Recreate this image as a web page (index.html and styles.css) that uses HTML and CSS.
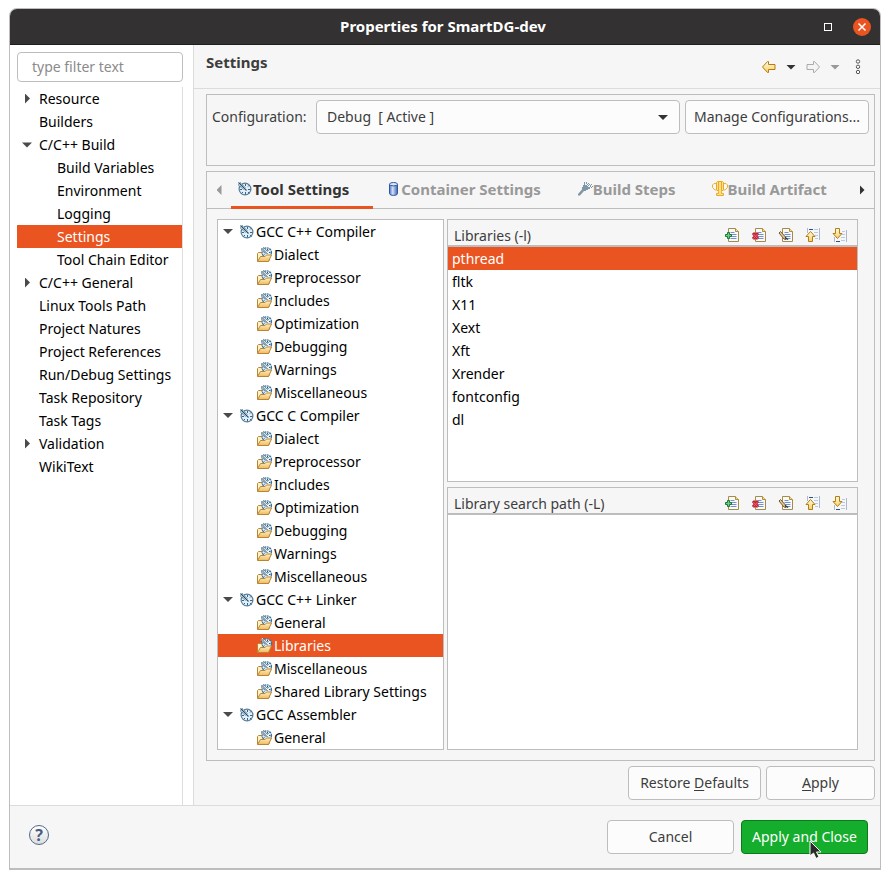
FILE: index.html
```html
<!DOCTYPE html>
<html lang="en">
<head>
<meta charset="utf-8">
<title>Properties for SmartDG-dev</title>
<link rel="stylesheet" href="styles.css">
</head>
<body>
<svg class="defs" aria-hidden="true">
  <defs>
    <linearGradient id="gold" x1="0" y1="0" x2="0" y2="1"><stop offset="0" stop-color="#fffbe0"/><stop offset="1" stop-color="#f6cf63"/></linearGradient>
    <linearGradient id="sand" x1="0" y1="0" x2="0" y2="1"><stop offset="0" stop-color="#fdf0c4"/><stop offset="1" stop-color="#f0b95c"/></linearGradient>
    <linearGradient id="steel" x1="0" y1="0" x2="1" y2="0"><stop offset="0" stop-color="#4a74c0"/><stop offset=".4" stop-color="#d3e2fa"/><stop offset="1" stop-color="#3b63b0"/></linearGradient>
    <symbol id="gauge" viewBox="0 0 16 16">
      <circle cx="8" cy="8" r="5.900" fill="#e3eff8" stroke="#557f9c" stroke-width="1.200"/>
      <path d="M8.500 3v2M8.500 11v2.500M11 8.500h2.500M3 8.500h2M11 5.500l1.500-1.500M11 11l1.500 1.500M6 11l-1.500 1.500" stroke="#376587"/>
      <path d="M1.500 1.500l7 7" stroke="#fff" stroke-width="3"/>
      <path d="M1 3.500l5.500 5M3 1.500l5.500 5" stroke="#39637f" stroke-dasharray="1.600 .7"/>
      <path d="M1.500 1.500l8 8" stroke="#24506f" stroke-width="1.100"/>
    </symbol>
    <symbol id="folder" viewBox="0 0 16 16">
      <path d="M.5 14V6.500l1-1h3l1 1.500H12V14z" fill="#fdf1c8" stroke="#b98534"/>
      <circle cx="9.800" cy="5.500" r="4.700" fill="#e3eff8" stroke="#3d7396" stroke-width="1.200" stroke-dasharray="2 .7"/>
      <path d="M4.500 1l6 5.500" stroke="#fff" stroke-width="2.800"/>
      <path d="M4 2.500l5 4.500M6 .5l4.500 4" stroke="#234c69" stroke-dasharray="1.500 .7"/>
      <path d="M4.500 1l6 6" stroke="#234c69"/>
      <path d="M10.500 2v1.500M12 5.500h1.500M11.500 3.500l1-1M7.500 7.500l-1 1" stroke="#285a7c"/>
      <path d="M.5 14.500l3-5h4.500l1.500-1.500h5l-3 6.500z" fill="url(#sand)" stroke="#b98534"/>
    </symbol>
    <symbol id="page" viewBox="0 0 16 16">
      <path d="M4.500 1.500h7l3 3v10h-10z" fill="#f6faff" stroke="#a78b45"/>
      <path d="M11.500 1.500v3h3" fill="#f4dc95" stroke="#b18f38"/>
      <path d="M6.500 5.500h4M6.500 7.500h6M6.500 9.500h6M6.500 11.500h6" stroke="#7692c5"/>
    </symbol>
    <symbol id="add" viewBox="0 0 16 16"><use href="#page"/>
      <path d="M3.500 5.500h2v2h2v2h-2v2h-2v-2h-2v-2h2z" fill="#79c58a" stroke="#157a33"/></symbol>
    <symbol id="delete" viewBox="0 0 16 16"><use href="#page"/>
      <path d="M2 6l5 6M7 6l-5 6" stroke="#c01f36" stroke-width="3"/><path d="M2.500 7l4 4.500M6.500 7l-4 4.500" stroke="#ef6675" stroke-width="1"/></symbol>
    <symbol id="edit" viewBox="0 0 16 16"><use href="#page"/>
      <path d="M1 6l1.500-1.500L7.500 10l.5 2.500-2-.5z" fill="#e8c990" stroke="#755a30"/><path d="M7 10.500l3 2" stroke="#2c3552" stroke-width="1.500"/></symbol>
    <symbol id="up" viewBox="0 0 16 16">
      <path d="M2.500 1v5M14.500 1v12" stroke="#adb9cb"/><path d="M4 2.500h4" stroke="#25508f"/><path d="M9 2.500h4M9 5.500h4M10 8.500h3M10 11.500h3" stroke="#b9c9e8"/>
      <path d="M5.500 4.500l4.500 5H7.500v5h-4v-5H1z" fill="url(#gold)" stroke="#b57d16"/></symbol>
    <symbol id="down" viewBox="0 0 16 16">
      <path d="M2.500 10v5M14.500 3v12" stroke="#adb9cb"/><path d="M4 14.500h4" stroke="#25508f"/><path d="M9 13.500h4M9 10.500h4M10 7.500h3M10 4.500h3" stroke="#b9c9e8"/>
      <path d="M5.500 11.500L1 6.500h2.500v-5h4v5H10z" fill="url(#gold)" stroke="#b57d16"/></symbol>
    <symbol id="arrow" viewBox="0 0 16 16"><path d="M1.500 8l5-5.500h1v3h6.500v5H7.500v3h-1z" stroke-linejoin="round"/></symbol>
    <symbol id="container" viewBox="0 0 16 16"><path d="M4.500 3.500v9c0 2.500 8 2.500 8 0v-9" fill="url(#steel)" stroke="#2f559f"/><ellipse cx="8.500" cy="3.200" rx="4" ry="1.700" fill="#dce8fb" stroke="#2f559f"/></symbol>
    <symbol id="hammer" viewBox="0 0 16 16"><path d="M1 13l4-4.500V6h1V4h1V2h1v2h2v1h1v1h2v2h-2v1H9v1H7L3 14.500H1z" fill="#8097a8"/><path d="M7 1.500h4M9 2.500h4M10 3.500h5M11 4.500h4M13 5.500h3M14 6.500h1" stroke="#8097a8" stroke-dasharray="1 1"/></symbol>
    <symbol id="trophy" viewBox="0 0 16 16"><path d="M4 2.500H2L.5 4v2.500L3 9h2M12 2.500h2L15.500 4v2.500L13 9h-2" fill="none" stroke="#eeb12b"/><path d="M4.500 1.500l1-1h5l1 1v7l-2 2v2h2v2h-7v-2h2v-2l-2-2z" fill="#fae08b" stroke="#edaa24"/><path d="M6.500 1v9M9.500 1v9" stroke="#edaa24"/></symbol>
  </defs>
</svg>

<div class="window">
  <header class="titlebar">
    <h1>Properties for SmartDG-dev</h1>
    <div class="controls">
      <button class="maximize" aria-label="Maximize"></button>
      <button class="close" aria-label="Close"><svg viewBox="0 0 18 18"><path d="M5.500 5.500l7 7M12.500 5.500l-7 7" stroke="#fff" stroke-width="1.500"/></svg></button>
    </div>
  </header>

  <div class="body">
    <nav class="sidebar">
      <input class="filter" type="text" placeholder="type filter text" aria-label="type filter text">
      <ul class="pages">
        <li class="closed">Resource</li>
        <li>Builders</li>
        <li class="open">C/C++ Build</li>
        <li class="child">Build Variables</li>
        <li class="child">Environment</li>
        <li class="child">Logging</li>
        <li class="child selected">Settings</li>
        <li class="child">Tool Chain Editor</li>
        <li class="closed">C/C++ General</li>
        <li>Linux Tools Path</li>
        <li>Project Natures</li>
        <li>Project References</li>
        <li>Run/Debug Settings</li>
        <li>Task Repository</li>
        <li>Task Tags</li>
        <li class="closed">Validation</li>
        <li>WikiText</li>
      </ul>
    </nav>

    <main class="main">
      <div class="heading">
        <h2>Settings</h2>
        <div class="history">
          <button class="back" aria-label="Back"><svg class="icon"><use href="#arrow"/></svg></button>
          <button class="caret" aria-label="Back history"></button>
          <button class="forward" aria-label="Forward"><svg class="icon"><use href="#arrow"/></svg></button>
          <button class="caret dim" aria-label="Forward history"></button>
          <button class="more" aria-label="View menu"><svg viewBox="0 0 8 16"><g fill="#fff" stroke="#555"><circle cx="4" cy="2.500" r="1.700"/><circle cx="4" cy="7.800" r="1.700"/><circle cx="4" cy="13" r="1.700"/></g></svg></button>
        </div>
      </div>

      <div class="content">
        <section class="config">
          <label for="configuration">Configuration:</label>
          <div class="combo">
            <select id="configuration"><option>Debug&nbsp; [ Active ]</option></select>
          </div>
          <button class="button">Manage Configurations...</button>
        </section>

        <section class="folder">
          <div class="tabs">
            <button class="scroll left" aria-label="Previous tabs"></button>
            <div class="tablist" role="tablist">
              <button class="tab active" role="tab"><svg class="icon"><use href="#gauge"/></svg>Tool Settings</button>
              <button class="tab" role="tab"><svg class="icon"><use href="#container"/></svg>Container Settings</button>
              <button class="tab" role="tab"><svg class="icon"><use href="#hammer"/></svg>Build Steps</button>
              <button class="tab" role="tab"><svg class="icon"><use href="#trophy"/></svg>Build Artifact</button>
            </div>
            <button class="scroll right" aria-label="Next tabs"></button>
          </div>

          <div class="panes">
            <ul class="tools">
              <li class="tool"><svg class="icon"><use href="#gauge"/></svg>GCC C++ Compiler</li>
              <li><svg class="icon"><use href="#folder"/></svg>Dialect</li>
              <li><svg class="icon"><use href="#folder"/></svg>Preprocessor</li>
              <li><svg class="icon"><use href="#folder"/></svg>Includes</li>
              <li><svg class="icon"><use href="#folder"/></svg>Optimization</li>
              <li><svg class="icon"><use href="#folder"/></svg>Debugging</li>
              <li><svg class="icon"><use href="#folder"/></svg>Warnings</li>
              <li><svg class="icon"><use href="#folder"/></svg>Miscellaneous</li>
              <li class="tool"><svg class="icon"><use href="#gauge"/></svg>GCC C Compiler</li>
              <li><svg class="icon"><use href="#folder"/></svg>Dialect</li>
              <li><svg class="icon"><use href="#folder"/></svg>Preprocessor</li>
              <li><svg class="icon"><use href="#folder"/></svg>Includes</li>
              <li><svg class="icon"><use href="#folder"/></svg>Optimization</li>
              <li><svg class="icon"><use href="#folder"/></svg>Debugging</li>
              <li><svg class="icon"><use href="#folder"/></svg>Warnings</li>
              <li><svg class="icon"><use href="#folder"/></svg>Miscellaneous</li>
              <li class="tool"><svg class="icon"><use href="#gauge"/></svg>GCC C++ Linker</li>
              <li><svg class="icon"><use href="#folder"/></svg>General</li>
              <li class="selected"><svg class="icon"><use href="#folder"/></svg>Libraries</li>
              <li><svg class="icon"><use href="#folder"/></svg>Miscellaneous</li>
              <li><svg class="icon"><use href="#folder"/></svg>Shared Library Settings</li>
              <li class="tool"><svg class="icon"><use href="#gauge"/></svg>GCC Assembler</li>
              <li><svg class="icon"><use href="#folder"/></svg>General</li>
            </ul>

            <div class="lists">
              <section class="list">
                <div class="listhead">
                  <h3>Libraries (-l)</h3>
                  <div class="toolbar">
                    <button aria-label="Add"><svg class="icon"><use href="#add"/></svg></button>
                    <button aria-label="Delete"><svg class="icon"><use href="#delete"/></svg></button>
                    <button aria-label="Edit"><svg class="icon"><use href="#edit"/></svg></button>
                    <button aria-label="Move up"><svg class="icon"><use href="#up"/></svg></button>
                    <button aria-label="Move down"><svg class="icon"><use href="#down"/></svg></button>
                  </div>
                </div>
                <ul class="entries">
                  <li class="selected">pthread</li>
                  <li>fltk</li>
                  <li>X11</li>
                  <li>Xext</li>
                  <li>Xft</li>
                  <li>Xrender</li>
                  <li>fontconfig</li>
                  <li>dl</li>
                </ul>
              </section>
              <section class="list">
                <div class="listhead">
                  <h3>Library search path (-L)</h3>
                  <div class="toolbar">
                    <button aria-label="Add"><svg class="icon"><use href="#add"/></svg></button>
                    <button aria-label="Delete"><svg class="icon"><use href="#delete"/></svg></button>
                    <button aria-label="Edit"><svg class="icon"><use href="#edit"/></svg></button>
                    <button aria-label="Move up"><svg class="icon"><use href="#up"/></svg></button>
                    <button aria-label="Move down"><svg class="icon"><use href="#down"/></svg></button>
                  </div>
                </div>
              </section>
            </div>
          </div>
        </section>

        <div class="pageactions">
          <button class="button restore">Restore <u>D</u>efaults</button>
          <button class="button apply"><u>A</u>pply</button>
        </div>
      </div>
    </main>
  </div>

  <footer class="footer">
    <button class="help" aria-label="Help">?</button>
    <div class="actions">
      <button class="button">Cancel</button>
      <button class="button primary">Apply and Close
        <svg class="pointer" viewBox="0 0 14 20" aria-hidden="true"><path d="M1 1v15l3.500-3 2.500 5.500 3-1.500-2.500-5H12z" fill="#2a2a2a" stroke="#fff"/></svg>
      </button>
    </div>
  </footer>
</div>
</body>
</html>
```
FILE: styles.css
```css
* { box-sizing: border-box; }

body {
  margin: 0;
  padding: 8px 9px 9px;
  background: #fff;
  color: #3d3d3d;
  font: 14px/23px "Noto Sans", "Open Sans", sans-serif;
}

button, input, select { font: inherit; color: inherit; }
button { margin: 0; padding: 0; border: 0; background: none; }
ul { margin: 0; padding: 0; list-style: none; }
h1, h2 { margin: 0; font-size: 15px; }
h3 { margin: 0; font-size: 14px; font-weight: normal; }

.defs { position: absolute; width: 0; height: 0; }
.icon { display: block; flex: none; width: 16px; height: 16px; }

.window {
  display: flex;
  flex-direction: column;
  min-height: calc(100vh - 17px);
  border: 1px solid #bdbdbd;
  border-bottom-width: 2px;
  border-radius: 8px 8px 0 0;
  background: #f6f6f6;
  overflow: hidden;
}

/* Title bar */
.titlebar {
  display: grid;
  grid-template-columns: 1fr auto 1fr;
  align-items: center;
  height: 36px;
  padding-right: 4px;
  background: #333132;
  border-bottom: 1px solid #1f1e1e;
  color: #fff;
}
.titlebar h1 { grid-column: 2; }
.controls { display: flex; align-items: center; justify-content: flex-end; gap: 21px; padding-right: 5px; }
.maximize { width: 8px; height: 8px; border: 1px solid #fff; }
.close { width: 18px; height: 18px; border-radius: 50%; background: #e95420; }
.close svg { display: block; }

/* Page tree */
.body { display: flex; flex: 1; }
.sidebar {
  display: flex;
  flex-direction: column;
  flex: none;
  width: 184px;
  padding: 7px 10px 0 7px;
  border-right: 1px solid #dcdcdc;
  background: #fff;
}
.filter {
  width: 100%;
  height: 30px;
  margin-bottom: 5px;
  padding: 0 14px 2px;
  border: 1px solid #bdbdbd;
  border-radius: 4px;
  background: #fff;
}
.filter::placeholder { color: #8b8b8b; opacity: 1; }
.pages { flex: 1; border-right: 1px solid #dedede; color: #000; }
.pages li { display: flex; align-items: center; height: 23px; padding-left: 22px; white-space: nowrap; }
.pages .child { padding-left: 40px; }
.selected, .pages .selected, .tools .selected { background: #e95420; color: #fff; }
.pages .closed, .pages .open { padding-left: 5px; }
.closed::before, .open::before {
  content: "";
  width: 10px;
  height: 10px;
  margin-right: 7px;
  background: #4a4a4a;
}
.closed::before { clip-path: polygon(30% 0, 80% 50%, 30% 100%); }
.open::before { clip-path: polygon(0 30%, 100% 30%, 50% 80%); }

/* Page heading */
.main { display: flex; flex-direction: column; flex: 1; min-width: 0; }
.heading {
  display: flex;
  justify-content: space-between;
  height: 44px;
  padding: 6px 18px 0 12px;
  border-bottom: 1px solid #dcdcdc;
}
.history { display: flex; align-items: center; height: 32px; gap: 9px; }
.back { fill: url(#gold); stroke: #b97a10; }
.forward { fill: #f4f4f4; stroke: #aaa; }
.forward svg { transform: scaleX(-1); }
.caret { width: 10px; height: 5px; background: #333; clip-path: polygon(0 0, 100% 0, 50% 100%); }
.caret.dim { background: #999; }
.more { width: 8px; height: 16px; margin-left: 5px; }
.more svg { display: block; }

/* Configuration group */
.content { display: flex; flex-direction: column; flex: 1; gap: 5px; padding: 5px 5px 5px 12px; }
.config {
  display: flex;
  align-items: flex-start;
  gap: 5px;
  height: 72px;
  padding: 5px;
  border: 1px solid #bdbdbd;
}
.config label { width: 99px; line-height: 34px; white-space: nowrap; }
.combo { position: relative; flex: 1; }
.combo::after {
  content: "";
  position: absolute;
  right: 12px;
  top: 15px;
  width: 10px;
  height: 5px;
  background: #333;
  clip-path: polygon(0 0, 100% 0, 50% 100%);
  pointer-events: none;
}
.combo select {
  display: block;
  appearance: none;
  width: 100%;
  height: 34px;
  padding: 0 10px 2px;
  border: 1px solid #bdbdbd;
  border-radius: 4px;
  background: #fcfcfc;
}
.button {
  height: 34px;
  padding: 0 8px 2px;
  border: 1px solid #bdbdbd;
  border-radius: 4px;
  background: #fcfcfc;
  white-space: nowrap;
}
.button u { text-underline-offset: 2px; }

/* Tab folder */
.folder { display: flex; flex-direction: column; flex: 1; border: 1px solid #bdbdbd; }
.tabs { display: flex; height: 37px; border-bottom: 1px solid #bdbdbd; }
.scroll { flex: none; width: 24px; display: flex; align-items: center; justify-content: center; }
.scroll::before { content: ""; width: 5px; height: 10px; background: #333; }
.scroll.left::before { background: #999; clip-path: polygon(100% 0, 100% 100%, 0 50%); }
.scroll.right::before { clip-path: polygon(0 0, 100% 50%, 0 100%); }
.tablist { display: flex; flex: 1; gap: 6px; min-width: 0; }
.tab {
  display: flex;
  align-items: center;
  height: 37px;
  padding: 0 24px 0 6px;
  border-bottom: 3px solid transparent;
  color: #999;
  font-size: 15px;
  font-weight: bold;
  white-space: nowrap;
}
.tab.active { border-color: #e95420; color: #333; }

.panes { display: flex; flex: 1; gap: 3px; padding: 10px 16px 10px 10px; }
.tools { flex: none; width: 227px; border: 1px solid #bdbdbd; background: #fff; color: #000; }
.tools li { display: flex; align-items: center; height: 23px; padding-left: 39px; gap: 1px; white-space: nowrap; }
.tools .tool { padding-left: 5px; }
.tool::before {
  content: "";
  width: 10px;
  height: 5px;
  margin-right: 5px;
  background: #4a4a4a;
  clip-path: polygon(0 0, 100% 0, 50% 100%);
}

.lists { display: grid; grid-template-rows: 1fr 1fr; flex: 1; gap: 5px; min-width: 0; }
.list { border: 1px solid #bdbdbd; background: #fff; }
.listhead {
  display: flex;
  align-items: center;
  justify-content: space-between;
  height: 27px;
  padding: 5px 9px 0 6px;
  border-bottom: 2px solid #bdbdbd;
  background: #f6f6f6;
}
.toolbar { display: flex; gap: 11px; }
.entries { color: #000; }
.entries li { height: 23px; padding-left: 4px; }

.pageactions { display: flex; justify-content: flex-end; gap: 5px; }
.restore { width: 133px; }
.apply { width: 109px; }

/* Dialog buttons */
.footer {
  display: flex;
  justify-content: space-between;
  align-items: flex-start;
  height: 63px;
  padding: 14px 12px 0 19px;
  border-top: 1px solid #dcdcdc;
}
.help {
  width: 20px;
  height: 20px;
  margin-top: 5px;
  border: 1px solid #52698a;
  border-radius: 50%;
  background: linear-gradient(#fff, #ddd);
  color: #465b80;
  font-weight: bold;
  font-size: 16px;
  line-height: 18px;
}
.actions { display: flex; gap: 7px; }
.actions .button { width: 127px; }
.actions .primary { position: relative; border-color: #0c7a1c; background: #15ad2c; color: #fff; }
.pointer { position: absolute; left: 67px; top: 19px; width: 14px; height: 20px; }
```
